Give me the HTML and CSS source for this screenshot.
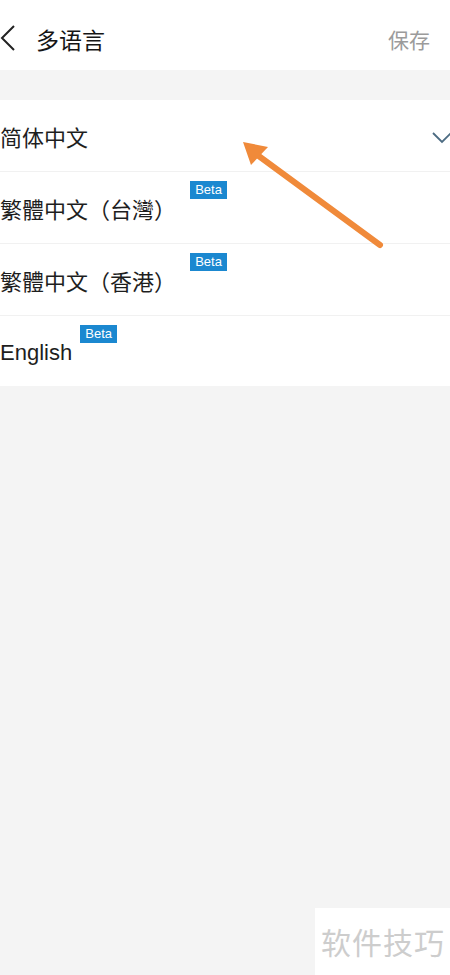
FILE: index.html
```html
<!DOCTYPE html>
<html lang="zh-CN">
<head>
<meta charset="utf-8">
<title>多语言</title>
<link rel="stylesheet" href="styles.css">
</head>
<body>
<div class="page">
  <header class="topbar">
    <div class="topbar-left">
      <svg class="back" width="16" height="26" viewBox="0 0 16 26"><path d="M14 1 L2 13 L14 25" fill="none" stroke="#222" stroke-width="2"/></svg>
      <span class="title">多语言</span>
    </div>
    <span class="save">保存</span>
  </header>
  <div class="spacer"></div>
  <ul class="list">
    <li class="row">
      <span class="label">简体中文</span>
      <svg class="check" width="20" height="12" viewBox="0 0 20 12"><path d="M1 1 L10 10 L19 1" fill="none" stroke="#4c6b82" stroke-width="1.8"/></svg>
    </li>
    <li class="row">
      <span class="label">繁體中文（台灣）</span>
      <span class="badge">Beta</span>
    </li>
    <li class="row">
      <span class="label">繁體中文（香港）</span>
      <span class="badge">Beta</span>
    </li>
    <li class="row">
      <span class="label label-en">English</span>
      <span class="badge badge-tight">Beta</span>
    </li>
  </ul>
  <div class="rest">
    <div class="watermark">软件技巧</div>
  </div>
  <svg class="arrow" width="450" height="975" viewBox="0 0 450 975">
    <line x1="380" y1="245" x2="256" y2="154" stroke="#f08a3a" stroke-width="6" stroke-linecap="round"/>
    <polygon points="243,142 268,147 251,165" fill="#f08a3a"/>
  </svg>
</div>
</body>
</html>
```
FILE: styles.css
```css
* { box-sizing: border-box; }
html, body {
  margin: 0;
  padding: 0;
  background: #f4f4f4;
  font-family: "Noto Sans CJK SC", "Noto Sans", sans-serif;
}
.page {
  position: relative;
  width: 450px;
  height: 975px;
  display: flex;
  flex-direction: column;
  overflow: hidden;
}
.topbar {
  height: 70px;
  background: #fff;
  display: flex;
  align-items: center;
  justify-content: space-between;
  padding-top: 8px;
  padding-right: 20px;
}
.topbar-left {
  display: flex;
  align-items: center;
}
.back {
  display: block;
  margin-top: -3px;
}
.title {
  margin-left: 20px;
  font-size: 23px;
  color: #151515;
  line-height: 1;
}
.save {
  font-size: 21px;
  color: #9b9b9b;
  line-height: 1;
}
.spacer {
  height: 30px;
}
.list {
  list-style: none;
  margin: 0;
  padding: 0;
  background: #fff;
}
.row {
  height: 72px;
  display: flex;
  align-items: center;
  border-top: 1px solid #f1f1f1;
}
.row:first-child { border-top: none; height: 71px; }
.row:last-child { height: 71px; }
.label {
  font-size: 22px;
  color: #1e1e1e;
  line-height: 1;
}
.label-en {
  font-family: "Liberation Sans", "Noto Sans", sans-serif;
  margin-top: 4px;
}
.check {
  margin-left: auto;
  margin-right: -2px;
  margin-top: 4px;
}
.badge {
  align-self: flex-start;
  margin-top: 9px;
  margin-left: 14px;
  width: 37px;
  height: 18px;
  background: #1b88d0;
  color: #fff;
  font-family: "Liberation Sans", Arial, sans-serif;
  font-size: 13px;
  line-height: 18px;
  text-align: center;
}
.badge-tight { margin-left: 8px; }
.rest {
  flex: 1;
  display: flex;
  justify-content: flex-end;
  align-items: flex-end;
}
.watermark {
  width: 135px;
  height: 67px;
  background: #fff;
  color: #cdcdcd;
  font-size: 30px;
  line-height: 67px;
  padding-left: 6px;
  letter-spacing: 1px;
}
.arrow {
  position: absolute;
  left: 0;
  top: 0;
  pointer-events: none;
}
```
